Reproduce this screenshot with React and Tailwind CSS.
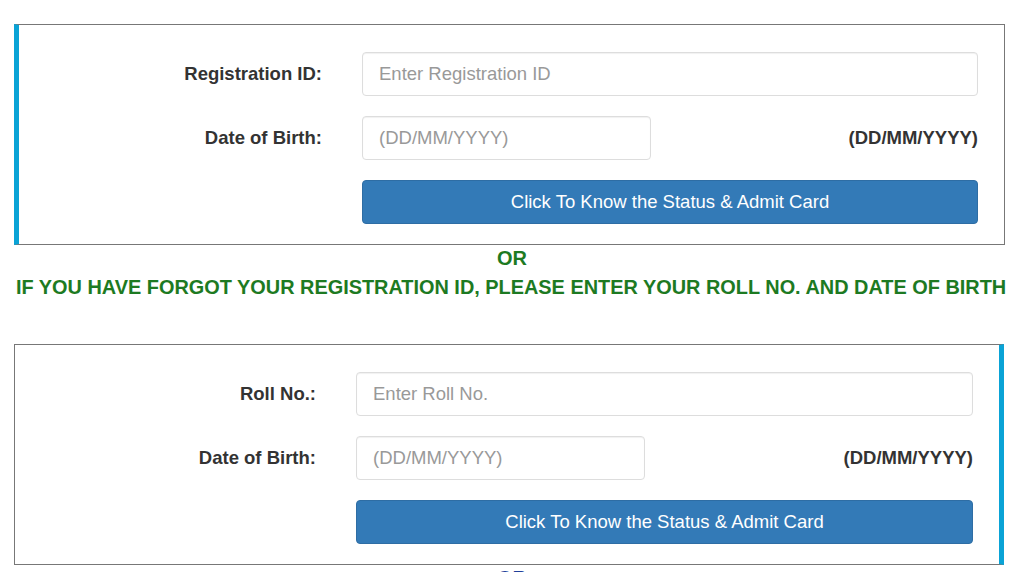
import React from 'react'

const labelText = "shrink-0 text-right text-[18.5px] font-bold text-[#333]"
const inputCls = "h-[44px] rounded-[4px] border border-[#ddd] bg-white px-[16px] text-[18.5px] text-[#555] placeholder:text-[#999] shadow-[inset_0_1px_1px_rgba(0,0,0,0.06)] outline-none"

const LookupPanel = ({idLabel, idPlaceholder, accent}) => {
    const left = accent === "left"
    const border = left
        ? "border border-[#777] border-l-[5px] border-l-[#0aa3d6]"
        : "border border-[#777] border-r-[5px] border-r-[#0aa3d6]"
    const labelCls = `${labelText} ${left ? "w-[303px]" : "w-[301px]"}`
    return (
        <div className={`${border} bg-white pt-[27px] pb-[20px] pr-[26px] flex flex-col gap-[20px]`}>
            <div className="flex items-center gap-[40px]">
                <label className={labelCls}>{idLabel}</label>
                <input className={`${inputCls} flex-1`} placeholder={idPlaceholder}/>
            </div>
            <div className="flex items-center gap-[40px]">
                <label className={labelCls}>Date of Birth:</label>
                <div className="flex-1 flex items-center">
                    <input className={`${inputCls} w-[289px]`} placeholder="(DD/MM/YYYY)"/>
                    <span className="ml-auto text-[18.5px] font-bold text-[#333]">(DD/MM/YYYY)</span>
                </div>
            </div>
            <div className="flex items-center gap-[40px]">
                <div className={left ? "w-[303px] shrink-0" : "w-[301px] shrink-0"}/>
                <button
                    type="button"
                    className="flex-1 h-[44px] rounded-[4px] bg-[#337ab7] border border-[#2e6da4] text-white text-[18.5px]"
                >
                    Click To Know the Status &amp; Admit Card
                </button>
            </div>
        </div>
    )
}

export default function App() {
    return (
        <div className="w-[1024px] h-[572px] overflow-hidden bg-white font-['Liberation_Sans',Arial,sans-serif]">
            <div className="pt-[24px] pl-[14px] pr-[19px]">
                <LookupPanel idLabel="Registration ID:" idPlaceholder="Enter Registration ID" accent="left"/>
            </div>

            <div className="mt-[2px] text-center text-[20px] font-bold text-[#1d7a22] leading-[22px]">OR</div>
            <div className="mt-[7px] pl-[16px] text-[19.9px] font-bold text-[#1d7a22] leading-[22px] whitespace-nowrap">
                IF YOU HAVE FORGOT YOUR REGISTRATION ID, PLEASE ENTER YOUR ROLL NO. AND DATE OF BIRTH
            </div>

            <div className="mt-[46px] pl-[14px] pr-[20px]">
                <LookupPanel idLabel="Roll No.:" idPlaceholder="Enter Roll No." accent="right"/>
            </div>

            <div className="mt-[2px] text-center text-[20px] font-bold text-[#1f3f9a] leading-[22px]">OR</div>
        </div>
    )
}
